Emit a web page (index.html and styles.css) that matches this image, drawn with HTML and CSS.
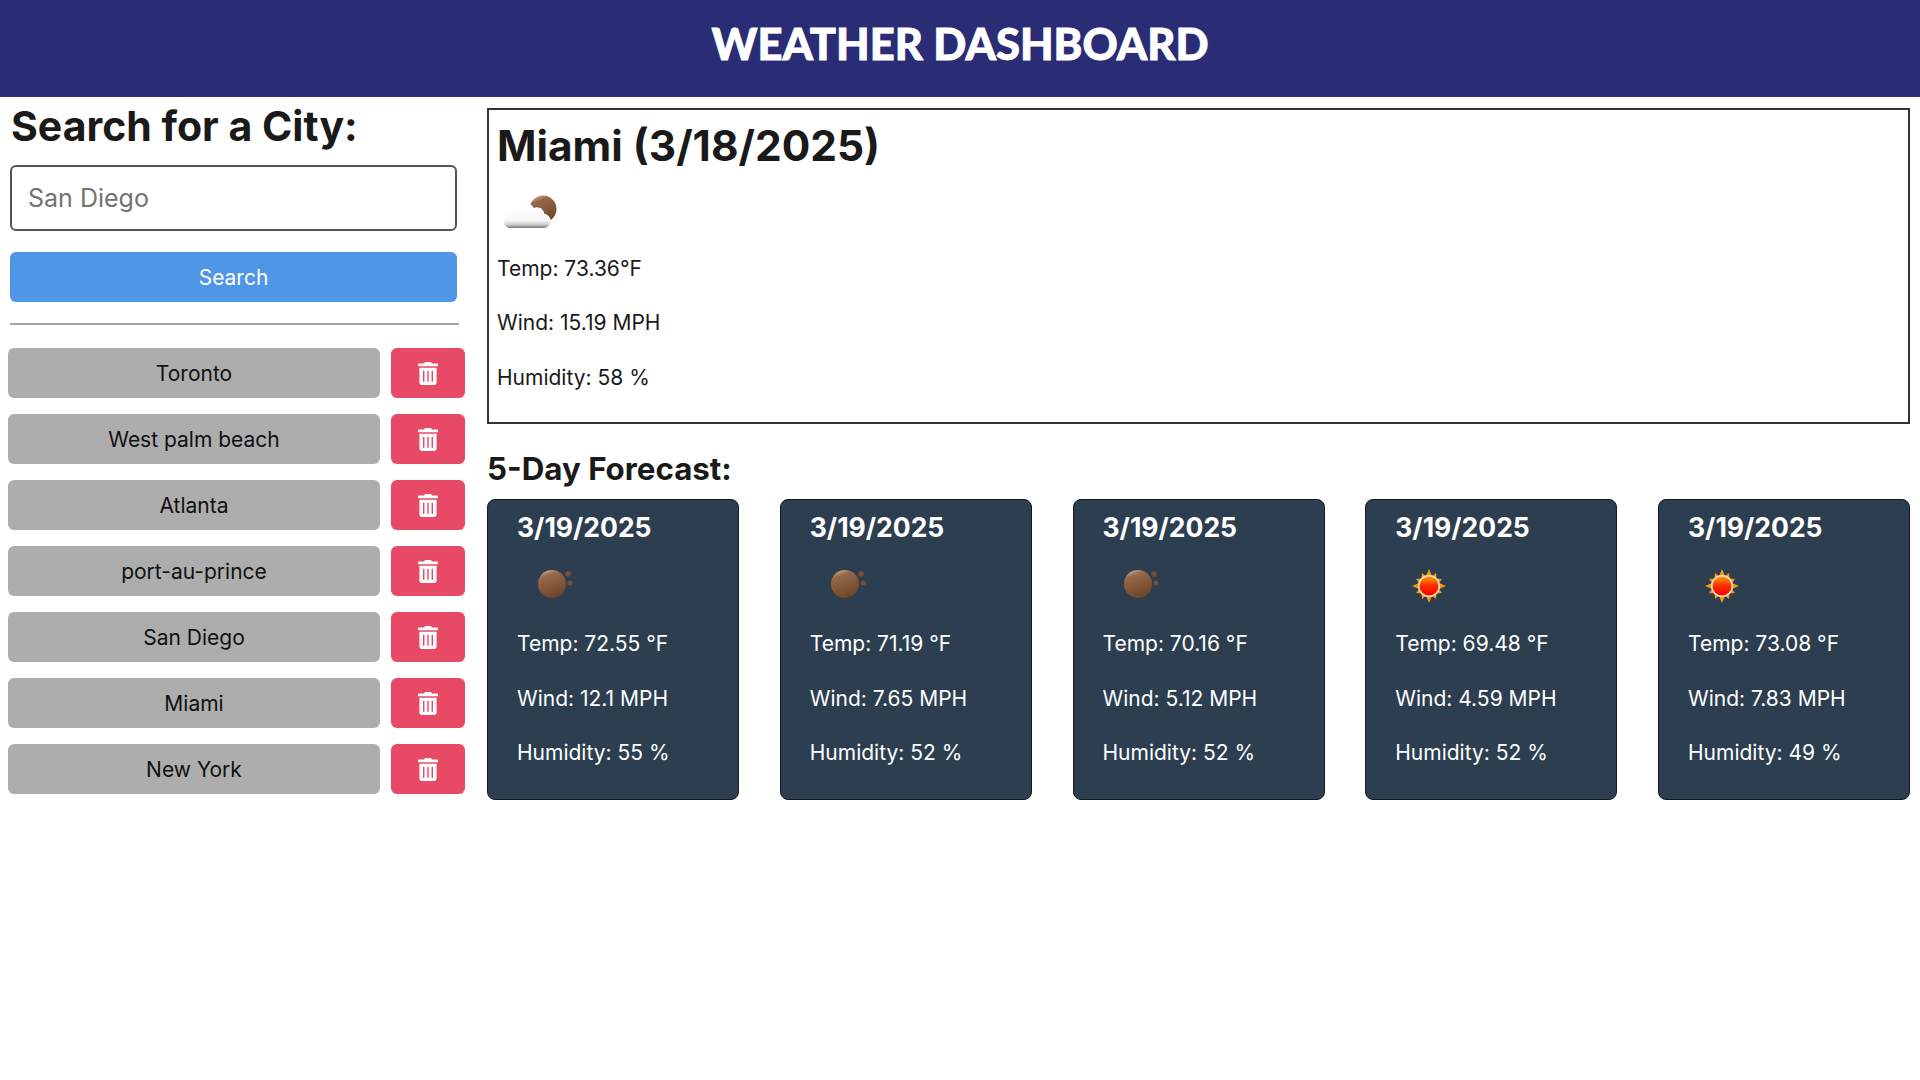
FILE: index.html
```html
<!DOCTYPE html>
<html lang="en">
<head>
    <meta charset="UTF-8">
    <meta name="viewport" content="width=device-width, initial-scale=1.0">
    <title>Weather Dashboard</title>
    <link rel="stylesheet" href="styles.css">
</head>
<body>
    <svg class="icon-defs" aria-hidden="true">
        <defs>
            <linearGradient id="moonFill" x1="0.2" y1="0" x2="0.6" y2="1">
                <stop offset="0" stop-color="#d2b59c"/>
                <stop offset="0.22" stop-color="#96694a"/>
                <stop offset="1" stop-color="#6d4327"/>
            </linearGradient>
            <linearGradient id="cloudFill" x1="0" y1="0" x2="0" y2="1">
                <stop offset="0" stop-color="#ffffff"/>
                <stop offset="0.7" stop-color="#f7f7f7"/>
                <stop offset="0.86" stop-color="#cfcfcf"/>
                <stop offset="1" stop-color="#77777a"/>
            </linearGradient>
            <linearGradient id="sunFill" x1="0" y1="0" x2="0" y2="1">
                <stop offset="0" stop-color="#ff9a00"/>
                <stop offset="0.5" stop-color="#ff2a00"/>
                <stop offset="1" stop-color="#f40000"/>
            </linearGradient>
            <symbol id="cloudMoon" viewBox="0 0 68 68">
                <circle cx="46" cy="30" r="13.500" fill="url(#moonFill)"/>
                <path d="M14 50C9.500 50 7 46.500 7 42.500C7 38.500 10 35 14 34.500C15 28 20.500 24 26 24C30.500 24 34.500 26.500 36.500 30.500C38 29.500 40 29 41.500 29.500C44 30 46 32.500 46.500 35.500C50.500 36 53 39.500 53 43C53 47 50 50 46 50Z" fill="#ffffff" stroke="#ffffff" stroke-width="2"/>
                <path d="M14 49C9.500 49 7 46 7 42.500C7 38.500 10 35 14 34.500C15 28 20.500 24 26 24C30.500 24 34.500 26.500 36.500 30.500C38 29.500 40 29 41.500 29.500C44 30 46 32.500 46.500 35.500C50.500 36 53 39.500 53 43C53 46.500 50 49 46 49Z" fill="url(#cloudFill)"/>
            </symbol>
            <symbol id="moon" viewBox="0 0 68 68">
                <circle cx="35" cy="32" r="14" fill="url(#moonFill)"/>
                <circle cx="51" cy="22" r="2.800" fill="#7a4e32"/>
                <circle cx="53" cy="31" r="2.500" fill="#7a4e32"/>
            </symbol>
            <symbol id="sun" viewBox="0 0 68 68">
                <polygon points="34,17 37,24 41,21 41.500,26.500 47,27 44,31 51,34 44,37 47,41 41.500,41.500 41,47 37,44 34,51 31,44 27,47 26.500,41.500 21,41 24,37 17,34 24,31 21,27 26.500,26.500 27,21 31,24" fill="#f29a13"/>
                <circle cx="34" cy="34" r="11" fill="#f7e4c0"/>
                <circle cx="34" cy="34" r="9.500" fill="url(#sunFill)"/>
            </symbol>
            <symbol id="trash" viewBox="0 0 448 512">
                <path d="M32 464a48 48 0 0 0 48 48h288a48 48 0 0 0 48-48V128H32zm272-256a16 16 0 0 1 32 0v224a16 16 0 0 1-32 0zm-96 0a16 16 0 0 1 32 0v224a16 16 0 0 1-32 0zm-96 0a16 16 0 0 1 32 0v224a16 16 0 0 1-32 0zM432 32H312l-9.400-18.700A24 24 0 0 0 281.100 0H166.800a23.720 23.720 0 0 0-21.400 13.300L136 32H16A16 16 0 0 0 0 48v32a16 16 0 0 0 16 16h416a16 16 0 0 0 16-16V48a16 16 0 0 0-16-16z"/>
            </symbol>
        </defs>
    </svg>

    <header class="site-header">
        <h1>WEATHER DASHBOARD</h1>
    </header>

    <div class="layout">
        <aside class="sidebar">
            <h2 class="search-title">Search for a City:</h2>
            <form class="search-form">
                <input class="search-input" type="text" placeholder="San Diego">
                <button class="search-button" type="button">Search</button>
            </form>
            <hr class="divider">
            <ul class="city-list">
                <li class="city-row">
                    <button class="city-button" type="button">Toronto</button>
                    <button class="delete-button" type="button"><svg class="trash-icon"><use href="#trash"/></svg></button>
                </li>
                <li class="city-row">
                    <button class="city-button" type="button">West palm beach</button>
                    <button class="delete-button" type="button"><svg class="trash-icon"><use href="#trash"/></svg></button>
                </li>
                <li class="city-row">
                    <button class="city-button" type="button">Atlanta</button>
                    <button class="delete-button" type="button"><svg class="trash-icon"><use href="#trash"/></svg></button>
                </li>
                <li class="city-row">
                    <button class="city-button" type="button">port-au-prince</button>
                    <button class="delete-button" type="button"><svg class="trash-icon"><use href="#trash"/></svg></button>
                </li>
                <li class="city-row">
                    <button class="city-button" type="button">San Diego</button>
                    <button class="delete-button" type="button"><svg class="trash-icon"><use href="#trash"/></svg></button>
                </li>
                <li class="city-row">
                    <button class="city-button" type="button">Miami</button>
                    <button class="delete-button" type="button"><svg class="trash-icon"><use href="#trash"/></svg></button>
                </li>
                <li class="city-row">
                    <button class="city-button" type="button">New York</button>
                    <button class="delete-button" type="button"><svg class="trash-icon"><use href="#trash"/></svg></button>
                </li>
            </ul>
        </aside>

        <main class="content">
            <section class="current">
                <h2 class="current-title">Miami (3/18/2025)</h2>
                <svg class="weather-icon"><use href="#cloudMoon"/></svg>
                <p>Temp: 73.36°F</p>
                <p>Wind: 15.19 MPH</p>
                <p>Humidity: 58 %</p>
            </section>

            <h3 class="forecast-title">5-Day Forecast:</h3>
            <div class="forecast">
                <article class="card">
                    <h4 class="card-date">3/19/2025</h4>
                    <svg class="weather-icon"><use href="#moon"/></svg>
                    <p>Temp: 72.55 °F</p>
                    <p>Wind: 12.1 MPH</p>
                    <p>Humidity: 55 %</p>
                </article>
                <article class="card">
                    <h4 class="card-date">3/19/2025</h4>
                    <svg class="weather-icon"><use href="#moon"/></svg>
                    <p>Temp: 71.19 °F</p>
                    <p>Wind: 7.65 MPH</p>
                    <p>Humidity: 52 %</p>
                </article>
                <article class="card">
                    <h4 class="card-date">3/19/2025</h4>
                    <svg class="weather-icon"><use href="#moon"/></svg>
                    <p>Temp: 70.16 °F</p>
                    <p>Wind: 5.12 MPH</p>
                    <p>Humidity: 52 %</p>
                </article>
                <article class="card">
                    <h4 class="card-date">3/19/2025</h4>
                    <svg class="weather-icon"><use href="#sun"/></svg>
                    <p>Temp: 69.48 °F</p>
                    <p>Wind: 4.59 MPH</p>
                    <p>Humidity: 52 %</p>
                </article>
                <article class="card">
                    <h4 class="card-date">3/19/2025</h4>
                    <svg class="weather-icon"><use href="#sun"/></svg>
                    <p>Temp: 73.08 °F</p>
                    <p>Wind: 7.83 MPH</p>
                    <p>Humidity: 49 %</p>
                </article>
            </div>
        </main>
    </div>
</body>
</html>
```
FILE: styles.css
```css
body {
    font-family: Inter, "Liberation Sans", sans-serif;
    margin: 0;
    background-color: #ffffff;
    color: #1a1a1a;
    font-size: 21px;
}
button, input {
    font-family: inherit;
}
.icon-defs {
    position: absolute;
    width: 0;
    height: 0;
}
.site-header {
    height: 97px;
    background-color: #2a2c75;
    text-align: center;
}
.site-header h1 {
    margin: 0;
    padding-top: 17px;
    font-family: Lato, sans-serif;
    font-size: 43.5px;
    font-weight: 900;
    line-height: 52px;
    color: #ffffff;
    -webkit-text-stroke: 0.8px #ffffff;
}
.layout {
    display: flex;
    align-items: flex-start;
}
.sidebar {
    flex: 0 0 487px;
    padding-top: 5px;
    box-sizing: border-box;
}
.search-title {
    margin: 0 0 15px 11px;
    font-size: 41px;
    font-weight: 700;
    line-height: 48px;
}
.search-form {
    display: flex;
    flex-direction: column;
    gap: 21px;
    width: 447px;
    margin-left: 10px;
}
.search-input {
    height: 66px;
    box-sizing: border-box;
    padding: 0 16px;
    border: 2px solid #555555;
    border-radius: 6px;
    font-size: 25px;
    color: #1a1a1a;
}
.search-input::placeholder {
    color: #727272;
    opacity: 1;
}
.search-button {
    height: 50px;
    border: none;
    border-radius: 6px;
    background-color: #4f96e6;
    color: #ffffff;
    font-size: 21px;
}
.divider {
    width: 449px;
    height: 2px;
    margin: 21px 0 23px 10px;
    border: none;
    background-color: #a6a6a6;
}
.city-list {
    display: flex;
    flex-direction: column;
    gap: 16px;
    margin: 0 0 0 8px;
    padding: 0;
    list-style: none;
    width: 457px;
}
.city-row {
    display: flex;
    gap: 11px;
    height: 50px;
}
.city-button {
    flex: 1;
    border: none;
    border-radius: 6px;
    background-color: #adadad;
    color: #111111;
    font-size: 21px;
}
.delete-button {
    display: flex;
    align-items: center;
    justify-content: center;
    width: 74px;
    padding: 0;
    border: none;
    border-radius: 6px;
    background-color: #e84a65;
}
.trash-icon {
    width: 20px;
    height: 23px;
    fill: #ffffff;
}
.content {
    flex: 1;
    min-width: 0;
    padding: 11px 10px 0 0;
}
.content p {
    margin: 0 0 24px;
    line-height: 30.67px;
}
.current {
    height: 316px;
    box-sizing: border-box;
    padding: 12px 8px;
    border: 2px solid #333333;
}
.current-title {
    margin: 0 0 9px;
    font-size: 42.400px;
    font-weight: 700;
    line-height: 48px;
}
.weather-icon {
    display: block;
    width: 68px;
    height: 68px;
    margin-bottom: 6.500px;
}
.forecast-title {
    margin: 26px 0 11px;
    font-size: 31.300px;
    font-weight: 700;
    line-height: 38px;
}
.forecast {
    display: flex;
    justify-content: space-between;
}
.card {
    width: 252px;
    height: 301px;
    box-sizing: border-box;
    padding: 10px 29px 0;
    border: 1px solid #15191e;
    border-radius: 8px;
    background-color: #2c3e50;
    color: #ffffff;
}
.card-date {
    margin: 0 0 8px;
    font-size: 26.500px;
    font-weight: 700;
    line-height: 34px;
}
.card .weather-icon {
    margin-bottom: 9px;
}
```
